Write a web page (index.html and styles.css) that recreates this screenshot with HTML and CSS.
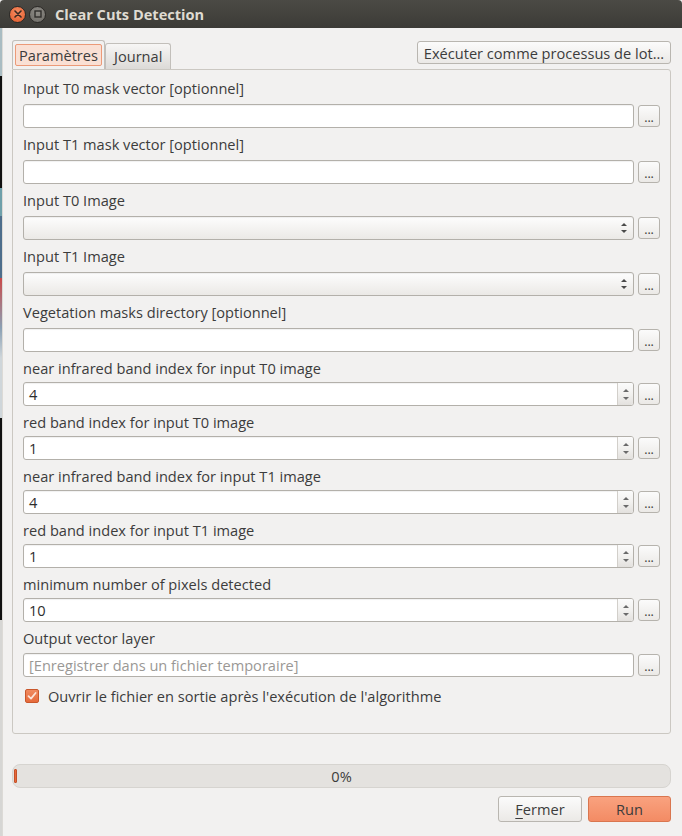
FILE: index.html
```html
<!DOCTYPE html>
<html lang="fr">
<head>
<meta charset="utf-8">
<title>Clear Cuts Detection</title>
<link rel="stylesheet" href="styles.css">
</head>
<body>
<div class="window">
  <div class="titlebar">
    <span class="wbtn close"><svg width="8" height="8" viewBox="0 0 8 8"><path d="M1 1L7 7M7 1L1 7" stroke="#3a2a22" stroke-width="1.6" stroke-linecap="round"/></svg></span>
    <span class="wbtn max"><svg width="8" height="8" viewBox="0 0 8 8"><rect x="1" y="1" width="6" height="6" fill="none" stroke="#2f2e2b" stroke-width="1.4"/></svg></span>
    <span class="title">Clear Cuts Detection</span>
  </div>
  <div class="main">
    <div class="desk"></div>
    <div class="content">
      <div class="tabbar">
        <div class="tabs">
          <div class="tab active"><span class="tab-focus">Paramètres</span></div>
          <div class="tab">Journal</div>
        </div>
        <button class="btn batch">Exécuter comme processus de lot...</button>
      </div>
      <div class="panel">
        <div class="row text">
          <label class="lbl">Input T0 mask vector [optionnel]</label>
          <div class="field"><div class="input"></div><button class="dots">...</button></div>
        </div>
        <div class="row text">
          <label class="lbl">Input T1 mask vector [optionnel]</label>
          <div class="field"><div class="input"></div><button class="dots">...</button></div>
        </div>
        <div class="row text">
          <label class="lbl">Input T0 Image</label>
          <div class="field"><div class="input combo"><span class="arrows"><i class="up"></i><i class="down"></i></span></div><button class="dots">...</button></div>
        </div>
        <div class="row text">
          <label class="lbl">Input T1 Image</label>
          <div class="field"><div class="input combo"><span class="arrows"><i class="up"></i><i class="down"></i></span></div><button class="dots">...</button></div>
        </div>
        <div class="row text">
          <label class="lbl">Vegetation masks directory [optionnel]</label>
          <div class="field"><div class="input"></div><button class="dots">...</button></div>
        </div>
        <div class="row spin">
          <label class="lbl">near infrared band index for input T0 image</label>
          <div class="field"><div class="input spinbox"><span class="val">4</span><span class="spinbtns"><i class="up"></i><i class="down"></i></span></div><button class="dots">...</button></div>
        </div>
        <div class="row spin">
          <label class="lbl">red band index for input T0 image</label>
          <div class="field"><div class="input spinbox"><span class="val">1</span><span class="spinbtns"><i class="up"></i><i class="down"></i></span></div><button class="dots">...</button></div>
        </div>
        <div class="row spin">
          <label class="lbl">near infrared band index for input T1 image</label>
          <div class="field"><div class="input spinbox"><span class="val">4</span><span class="spinbtns"><i class="up"></i><i class="down"></i></span></div><button class="dots">...</button></div>
        </div>
        <div class="row spin">
          <label class="lbl">red band index for input T1 image</label>
          <div class="field"><div class="input spinbox"><span class="val">1</span><span class="spinbtns"><i class="up"></i><i class="down"></i></span></div><button class="dots">...</button></div>
        </div>
        <div class="row spin">
          <label class="lbl">minimum number of pixels detected</label>
          <div class="field"><div class="input spinbox"><span class="val">10</span><span class="spinbtns"><i class="up"></i><i class="down"></i></span></div><button class="dots">...</button></div>
        </div>
        <div class="row output">
          <label class="lbl">Output vector layer</label>
          <div class="field"><div class="input"><span class="placeholder">[Enregistrer dans un fichier temporaire]</span></div><button class="dots">...</button></div>
        </div>
        <div class="check-row">
          <span class="checkbox"><svg width="10" height="10" viewBox="0 0 10 10"><path d="M1.5 5.2L4 7.6L8.6 2" fill="none" stroke="#fbe3d8" stroke-width="1.8" stroke-linecap="round" stroke-linejoin="round"/></svg></span>
          <span class="check-label">Ouvrir le fichier en sortie après l'exécution de l'algorithme</span>
        </div>
      </div>
      <div class="progress"><span class="chunk"></span><span class="pct">0%</span></div>
      <div class="actions">
        <button class="btn close-btn"><u>F</u>ermer</button>
        <button class="btn run">Run</button>
      </div>
    </div>
  </div>
</div>
</body>
</html>
```
FILE: styles.css
```css
* { box-sizing: border-box; }
html, body { margin: 0; padding: 0; }
body {
  width: 682px;
  height: 836px;
  overflow: hidden;
  font-family: "Open Sans", "Noto Sans", sans-serif;
  font-size: 14.6px;
  color: #3c3c3c;
  background: #f2f1f0;
}
.window {
  height: 836px;
  display: flex;
  flex-direction: column;
}
.titlebar {
  height: 28px;
  flex: none;
  background: linear-gradient(#4b4a45, #3c3b37);
  display: flex;
  align-items: center;
  padding-left: 9px;
  border-radius: 4px 4px 0 0;
}
.wbtn {
  width: 17px;
  height: 17px;
  border-radius: 50%;
  display: flex;
  align-items: center;
  justify-content: center;
  margin-right: 3px;
}
.wbtn.close {
  background: radial-gradient(circle at 50% 35%, #f88d63, #e05a2a);
  border: 1px solid #2b2926;
}
.wbtn.max {
  background: radial-gradient(circle at 50% 35%, #8f8d87, #6c6a65);
  border: 1px solid #2b2926;
}
.title {
  margin-left: 6px;
  font-weight: bold;
  font-size: 14.6px;
  color: #dfdbd2;
}
.main {
  flex: 1;
  display: flex;
}
.desk {
  width: 3px;
  flex: none;
  background: linear-gradient(#a9bcc2 0, #a9bcc2 48px, #111 48px, #111 160px, #6ea0aa 160px, #6ea0aa 188px, #4d6e8c 188px, #4d6e8c 250px, #c94a4a 250px, #8aa0b4 300px, #cfd6da 330px, #cfd6da 390px, #111 390px, #111 592px, #d6d6d4 592px, #d6d6d4 100%);
  border-right: 1px solid #dcdad6;
}
.content {
  flex: 1;
  display: flex;
  flex-direction: column;
  padding: 11px 11px 14px 9px;
}
.tabbar {
  display: flex;
  justify-content: space-between;
  align-items: flex-start;
  height: 30px;
  flex: none;
}
.tabs {
  display: flex;
  align-items: flex-end;
  height: 30px;
  margin-bottom: -1px;
  position: relative;
  z-index: 1;
}
.tab {
  height: 26px;
  padding: 0 8px 1px 8px;
  display: flex;
  align-items: center;
  border: 1px solid #c2bfba;
  border-bottom: none;
  border-radius: 3px 3px 0 0;
  background: linear-gradient(#f7f6f5, #dcdad7);
  color: #3c3c3c;
}
.tab.active {
  height: 29px;
  padding: 3px 2px 2px 2px;
  background: #f2f1f0;
  align-items: flex-start;
}
.tab-focus {
  display: flex;
  align-items: center;
  height: 22px;
  padding: 0 3px;
  border: 1px solid #ec9a78;
  border-radius: 2px;
  background: #fae0d4;
}
.btn {
  font-family: inherit;
  font-size: 14.6px;
  color: #3c3c3c;
  border: 1px solid #b9b6b0;
  border-radius: 3px;
  background: linear-gradient(#fbfbfb, #ebe9e6);
  padding: 0;
  cursor: default;
  white-space: nowrap;
}
.batch {
  margin-top: 2px;
  height: 23px;
  width: 254px;
}
.panel {
  flex: 1;
  border: 1px solid #cbc8c2;
  border-radius: 0 3px 3px 3px;
  padding: 9px 10px 0 10px;
  display: flex;
  flex-direction: column;
}
.row {
  display: flex;
  flex-direction: column;
}
.lbl {
  line-height: 18px;
  height: 18px;
  white-space: nowrap;
}
.row.text .lbl { margin-bottom: 7px; }
.row.text { margin-bottom: 7px; }
.row.spin .lbl { margin-bottom: 5px; }
.row.spin { margin-bottom: 7px; }
.row.output .lbl { margin-bottom: 6px; }
.field {
  display: flex;
  align-items: center;
  gap: 4px;
  height: 24px;
}
.input {
  flex: 1;
  height: 24px;
  border: 1px solid #b3b0aa;
  border-radius: 3px;
  background: #fff;
  box-shadow: inset 0 1px 1px rgba(0,0,0,0.06);
  display: flex;
  align-items: center;
  padding-left: 5px;
}
.input.combo {
  background: linear-gradient(#fdfdfd, #ebe9e6);
  justify-content: flex-end;
  padding-right: 6px;
}
.arrows, .spinbtns {
  display: flex;
  flex-direction: column;
  align-items: center;
  justify-content: center;
  gap: 4px;
}
.up {
  width: 0;
  height: 0;
  border-left: 3px solid transparent;
  border-right: 3px solid transparent;
  border-bottom: 3px solid #4a4a4a;
}
.down {
  width: 0;
  height: 0;
  border-left: 3px solid transparent;
  border-right: 3px solid transparent;
  border-top: 3px solid #4a4a4a;
}
.spinbox {
  padding-right: 0;
}
.val {
  flex: 1;
  color: #2d2d2d;
}
.spinbtns {
  width: 16px;
  height: 22px;
  border-left: 1px solid #d2cfca;
  background: linear-gradient(#fbfbfb 0, #f2f1ef 50%, #e3e1de 100%);
  border-radius: 0 2px 2px 0;
  gap: 5px;
}
.spinbtns .up { border-bottom-color: #6a6a6a; }
.spinbtns .down { border-top-color: #6a6a6a; }
.placeholder {
  color: #9a9895;
}
.dots {
  width: 22px;
  height: 22px;
  flex: none;
  border: 1px solid #b6b3ad;
  border-radius: 3px;
  background: linear-gradient(#fbfbfb, #ebe9e6);
  font-family: inherit;
  font-size: 12.5px;
  color: #3c3c3c;
  padding: 0;
  line-height: 22px;
  padding-top: 1px;
  letter-spacing: -0.2px;
}
.check-row {
  display: flex;
  align-items: center;
  margin-top: 12px;
  padding-left: 2px;
  height: 14px;
}
.checkbox {
  width: 14px;
  height: 14px;
  border: 1px solid #c9572b;
  border-radius: 2px;
  background: linear-gradient(#f08a5f, #e66a3b);
  display: flex;
  align-items: center;
  justify-content: center;
  margin-right: 9px;
}
.progress {
  margin-top: 30px;
  height: 24px;
  flex: none;
  border: 1px solid #d6d4d0;
  border-radius: 8px;
  background: #e4e2df;
  display: flex;
  align-items: center;
  padding-left: 1px;
}
.chunk {
  width: 3px;
  height: 14px;
  border-radius: 1px;
  background: #e8693a;
  border: 1px solid #c4522a;
}
.pct {
  flex: 1;
  text-align: center;
  padding-right: 4px;
  font-size: 14.6px;
}
.actions {
  margin-top: 8px;
  display: flex;
  justify-content: flex-end;
  gap: 6px;
  flex: none;
}
.actions .btn {
  height: 26px;
  width: 84px;
}
.close-btn u { text-decoration: underline; text-underline-offset: 3px; }
.run {
  background: linear-gradient(#f9a27f, #f38b64) !important;
  border-color: #d9764f !important;
  width: 83px !important;
}
```
